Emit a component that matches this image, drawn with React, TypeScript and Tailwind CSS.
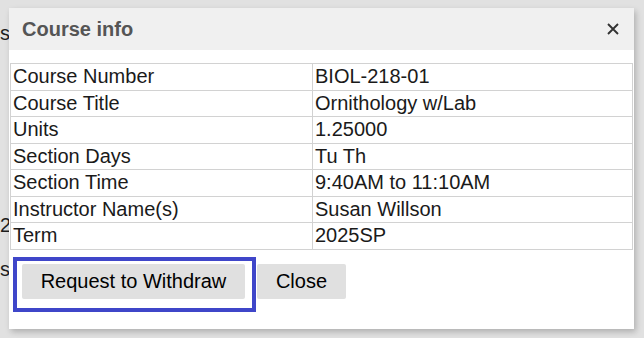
import React from "react";

const rows: [string, string][] = [
  ["Course Number", "BIOL-218-01"],
  ["Course Title", "Ornithology w/Lab"],
  ["Units", "1.25000"],
  ["Section Days", "Tu Th"],
  ["Section Time", "9:40AM to 11:10AM"],
  ["Instructor Name(s)", "Susan Willson"],
  ["Term", "2025SP"],
];

export default function App() {
  return (
    <div className="relative w-[644px] h-[338px] overflow-hidden bg-[#e1e1e1] font-['Liberation_Sans',Arial,sans-serif] text-[20px] leading-[23px] text-[#1f1f1f]">
      {/* page content behind the modal (only the first letters peek out) */}
      <div className="flex flex-col pt-[22px] w-[9px] overflow-hidden whitespace-nowrap">
        <div className="h-[23px]">s</div>
        <div className="h-[23px] mt-[169px]">2</div>
        <div className="h-[23px] mt-[21px]">s</div>
      </div>

      {/* modal dialog */}
      <div className="absolute left-[9px] top-[8px] w-[625px] h-[321px] bg-white shadow-[2px_3px_6px_rgba(0,0,0,0.22)] flex flex-col">
        <div className="h-[42px] bg-[#f0f0f0] flex items-center justify-between pl-[13px] pr-[15px]">
          <span className="font-bold text-[#555555]">Course info</span>
          <svg width="12" height="12" viewBox="0 0 12 12" className="text-[#333333]">
            <path d="M1 1 L11 11 M11 1 L1 11" stroke="currentColor" strokeWidth="1.9" strokeLinecap="butt" />
          </svg>
        </div>

        <table className="mt-[13px] mx-[1px] border-collapse w-[623px] text-[#1a1a1a]">
          <tbody>
            {rows.map(([k, v]) => (
              <tr key={k}>
                <td className="w-[302px] border border-[#d2d2d2] px-[2px] py-[1px] leading-[23.5px]">{k}</td>
                <td className="border border-[#d2d2d2] px-[2px] py-[1px] leading-[23.5px]">{v}</td>
              </tr>
            ))}
          </tbody>
        </table>

        <div className="flex gap-[12px] pl-[13px] mt-[14px]">
          <div className="relative">
            <button className="h-[35px] w-[223px] bg-[#e0e0e0] rounded-[2px] text-black text-[20px]">
              Request to Withdraw
            </button>
            <div className="absolute left-[-9px] top-[-7px] right-[-11px] bottom-[-13px] border-[4px] border-[#3f46c9] pointer-events-none" />
          </div>
          <button className="h-[35px] w-[89px] bg-[#e0e0e0] rounded-[2px] text-black text-[20px]">
            Close
          </button>
        </div>
      </div>
    </div>
  );
}
